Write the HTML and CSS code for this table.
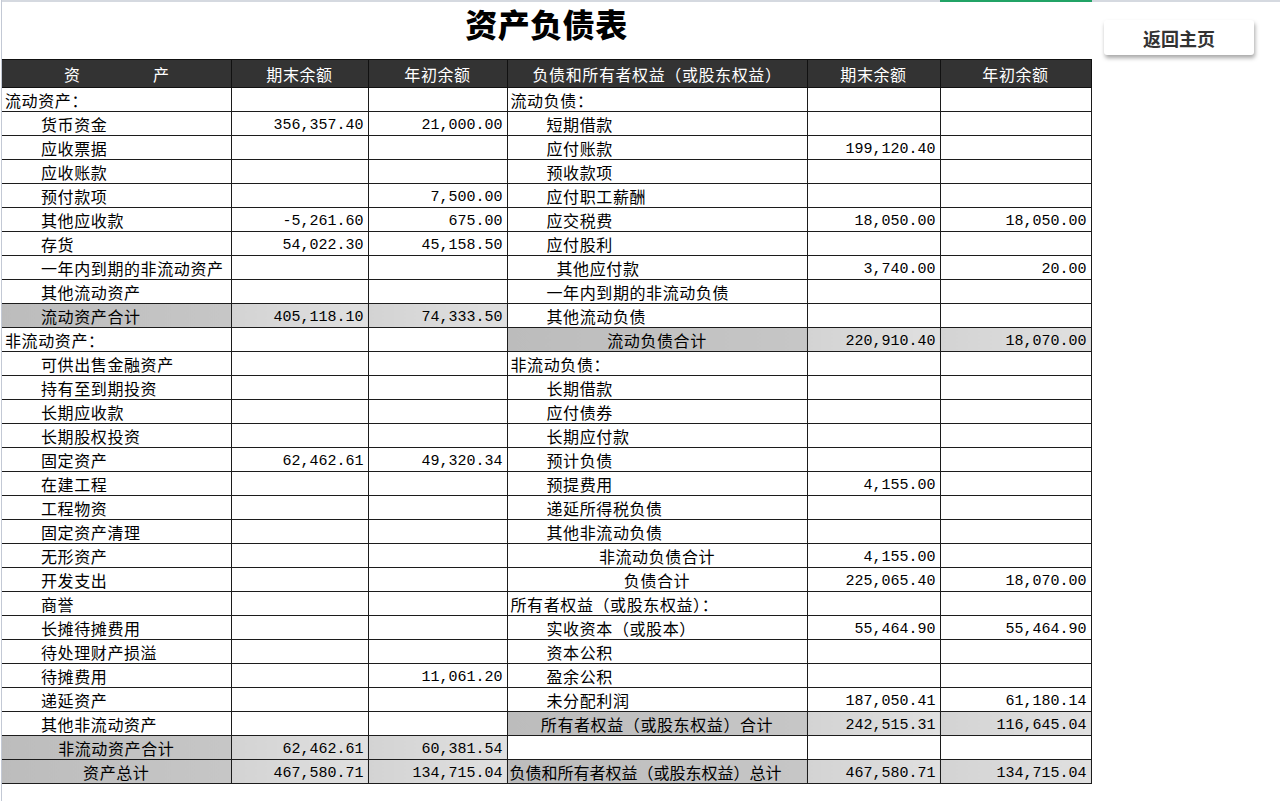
FILE: index.html
```html
<!DOCTYPE html>
<html lang="zh-CN">
<head>
<meta charset="utf-8">
<title>资产负债表</title>
<link rel="stylesheet" href="styles.css">
</head>
<body>
<div class="sheet">
  <div class="topbar"><div class="sel"></div></div>
  <div class="content">
    <div class="main">
      <div class="title">资产负债表</div>
      <table class="bs">
        <colgroup>
          <col class="c1"><col class="c2"><col class="c3"><col class="c4"><col class="c5"><col class="c6">
        </colgroup>
        <thead>
          <tr class="head">
            <th><span class="spread"><span>资</span><span>产</span></span></th>
            <th>期末余额</th>
            <th>年初余额</th>
            <th>负债和所有者权益（或股东权益）</th>
            <th>期末余额</th>
            <th>年初余额</th>
          </tr>
        </thead>
        <tbody>
          <tr><td class="l0">流动资产：</td><td class="n"></td><td class="n"></td><td class="l0">流动负债：</td><td class="n"></td><td class="n"></td></tr>
          <tr><td class="l1">货币资金</td><td class="n">356,357.40</td><td class="n">21,000.00</td><td class="l1">短期借款</td><td class="n"></td><td class="n"></td></tr>
          <tr><td class="l1">应收票据</td><td class="n"></td><td class="n"></td><td class="l1">应付账款</td><td class="n">199,120.40</td><td class="n"></td></tr>
          <tr><td class="l1">应收账款</td><td class="n"></td><td class="n"></td><td class="l1">预收款项</td><td class="n"></td><td class="n"></td></tr>
          <tr><td class="l1">预付款项</td><td class="n"></td><td class="n">7,500.00</td><td class="l1">应付职工薪酬</td><td class="n"></td><td class="n"></td></tr>
          <tr><td class="l1">其他应收款</td><td class="n">-5,261.60</td><td class="n">675.00</td><td class="l1">应交税费</td><td class="n">18,050.00</td><td class="n">18,050.00</td></tr>
          <tr><td class="l1">存货</td><td class="n">54,022.30</td><td class="n">45,158.50</td><td class="l1">应付股利</td><td class="n"></td><td class="n"></td></tr>
          <tr><td class="l1">一年内到期的非流动资产</td><td class="n"></td><td class="n"></td><td class="l2">其他应付款</td><td class="n">3,740.00</td><td class="n">20.00</td></tr>
          <tr><td class="l1">其他流动资产</td><td class="n"></td><td class="n"></td><td class="l1">一年内到期的非流动负债</td><td class="n"></td><td class="n"></td></tr>
          <tr><td class="l1 gl">流动资产合计</td><td class="n gv">405,118.10</td><td class="n gv">74,333.50</td><td class="l1">其他流动负债</td><td class="n"></td><td class="n"></td></tr>
          <tr><td class="l0">非流动资产：</td><td class="n"></td><td class="n"></td><td class="ct gl">流动负债合计</td><td class="n gv">220,910.40</td><td class="n gv">18,070.00</td></tr>
          <tr><td class="l1">可供出售金融资产</td><td class="n"></td><td class="n"></td><td class="l0">非流动负债：</td><td class="n"></td><td class="n"></td></tr>
          <tr><td class="l1">持有至到期投资</td><td class="n"></td><td class="n"></td><td class="l1">长期借款</td><td class="n"></td><td class="n"></td></tr>
          <tr><td class="l1">长期应收款</td><td class="n"></td><td class="n"></td><td class="l1">应付债券</td><td class="n"></td><td class="n"></td></tr>
          <tr><td class="l1">长期股权投资</td><td class="n"></td><td class="n"></td><td class="l1">长期应付款</td><td class="n"></td><td class="n"></td></tr>
          <tr><td class="l1">固定资产</td><td class="n">62,462.61</td><td class="n">49,320.34</td><td class="l1">预计负债</td><td class="n"></td><td class="n"></td></tr>
          <tr><td class="l1">在建工程</td><td class="n"></td><td class="n"></td><td class="l1">预提费用</td><td class="n">4,155.00</td><td class="n"></td></tr>
          <tr><td class="l1">工程物资</td><td class="n"></td><td class="n"></td><td class="l1">递延所得税负债</td><td class="n"></td><td class="n"></td></tr>
          <tr><td class="l1">固定资产清理</td><td class="n"></td><td class="n"></td><td class="l1">其他非流动负债</td><td class="n"></td><td class="n"></td></tr>
          <tr><td class="l1">无形资产</td><td class="n"></td><td class="n"></td><td class="ct">非流动负债合计</td><td class="n">4,155.00</td><td class="n"></td></tr>
          <tr><td class="l1">开发支出</td><td class="n"></td><td class="n"></td><td class="ct">负债合计</td><td class="n">225,065.40</td><td class="n">18,070.00</td></tr>
          <tr><td class="l1">商誉</td><td class="n"></td><td class="n"></td><td class="l0">所有者权益（或股东权益）：</td><td class="n"></td><td class="n"></td></tr>
          <tr><td class="l1">长摊待摊费用</td><td class="n"></td><td class="n"></td><td class="l1">实收资本（或股本）</td><td class="n">55,464.90</td><td class="n">55,464.90</td></tr>
          <tr><td class="l1">待处理财产损溢</td><td class="n"></td><td class="n"></td><td class="l1">资本公积</td><td class="n"></td><td class="n"></td></tr>
          <tr><td class="l1">待摊费用</td><td class="n"></td><td class="n">11,061.20</td><td class="l1">盈余公积</td><td class="n"></td><td class="n"></td></tr>
          <tr><td class="l1">递延资产</td><td class="n"></td><td class="n"></td><td class="l1">未分配利润</td><td class="n">187,050.41</td><td class="n">61,180.14</td></tr>
          <tr><td class="l1">其他非流动资产</td><td class="n"></td><td class="n"></td><td class="ct gl">所有者权益（或股东权益）合计</td><td class="n gv">242,515.31</td><td class="n gv">116,645.04</td></tr>
          <tr><td class="ct gl">非流动资产合计</td><td class="n gv">62,462.61</td><td class="n gv">60,381.54</td><td class="l0"></td><td class="n"></td><td class="n"></td></tr>
          <tr><td class="ct gl">资产总计</td><td class="n gv">467,580.71</td><td class="n gv">134,715.04</td><td class="tight gl">负债和所有者权益（或股东权益）总计</td><td class="n gv">467,580.71</td><td class="n gv">134,715.04</td></tr>
        </tbody>
      </table>
    </div>
    <div class="side">
      <div class="btn">返回主页</div>
    </div>
  </div>
</div>
</body>
</html>
```

FILE: styles.css
```css
html, body {
  margin: 0;
  padding: 0;
  background: #ffffff;
  height: 100%;
  overflow: hidden;
}

body {
  font-family: "Noto Sans CJK SC", "Noto Sans", sans-serif;
  color: #000;
}

.sheet {
  margin-left: 1px;
  border-left: 1px solid #c3c9d5;
  height: 801px;
  display: flex;
  flex-direction: column;
}

.topbar {
  height: 2px;
  background: #d5d9e0;
  display: flex;
}

.topbar .sel {
  margin-left: 938px;
  width: 152px;
  height: 2px;
  background: #21a366;
}

.content {
  display: flex;
  align-items: flex-start;
}

.main {
  width: 1089px;
}

.title {
  height: 57px;
  text-align: center;
  font-size: 32px;
  font-weight: 900;
  line-height: 42px;
  letter-spacing: 0.5px;
}

.bs {
  width: 1089px;
  table-layout: fixed;
  border-collapse: collapse;
  font-size: 16px;
  letter-spacing: 0.6px;
}

.c1 { width: 229px; }
.c2 { width: 137px; }
.c3 { width: 139px; }
.c4 { width: 300px; }
.c5 { width: 133px; }
.c6 { width: 151px; }

.bs th,
.bs td {
  border: 1px solid #1c1c1c;
  padding: 0;
  white-space: nowrap;
  overflow: hidden;
  line-height: 22px;
}

.bs tr {
  height: 24px;
}

.bs tr.head {
  height: 28px;
}

.bs th {
  background: #333333;
  color: #ffffff;
  font-weight: 400;
  text-align: center;
  line-height: 26px;
  border-color: #111;
}

.bs th:first-child,
.bs td:first-child {
  border-left: none;
}

.spread {
  display: flex;
  justify-content: space-between;
  padding: 0 61px 0 62px;
}

.l0 { padding-left: 3px !important; }
.l1 { padding-left: 39px !important; }
.l2 { padding-left: 49px !important; }
.ct { text-align: center; }
.tight {
  padding-left: 2px !important;
  letter-spacing: 0;
}

.bs td.n {
  text-align: right;
  padding: 3px 4px 0 0;
  line-height: 19px;
  font-family: "Liberation Mono", "DejaVu Sans Mono", monospace;
  font-size: 15px;
  letter-spacing: 0;
}

.gl {
  background: linear-gradient(90deg, #bcbcbc, #c6c6c6);
}

.gv {
  background: linear-gradient(90deg, #d3d3d3, #e0e0e0);
}

.side {
  padding: 18px 0 0 13px;
}

.btn {
  width: 150px;
  height: 35px;
  background: #ffffff;
  border-radius: 3px;
  box-shadow: 1px 3px 4px rgba(0, 0, 0, 0.35);
  display: flex;
  align-items: center;
  justify-content: center;
  font-size: 18px;
  font-weight: 700;
  color: #333333;
}
```
